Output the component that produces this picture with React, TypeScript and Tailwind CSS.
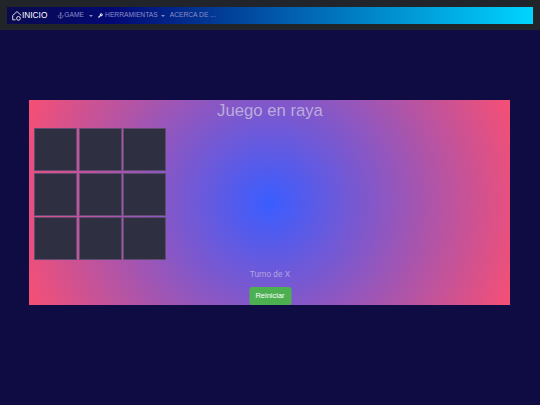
import { Anchor, Wrench } from "lucide-react";

function HomeIcon() {
  return (
    <svg width="10" height="11" viewBox="0 0 14 15" fill="none" stroke="white" strokeWidth="1.2">
      <path d="M1 13.5V7.5L7 2l6 5.5" />
      <path d="M1 13.5h4" />
      <circle cx="9" cy="11.5" r="2.6" />
    </svg>
  );
}

function Caret() {
  return <span className="inline-block border-x-[2px] border-t-[2px] border-x-transparent border-t-[#8d8dc8]" />;
}

const cells = [0, 1, 2, 3, 4, 5, 6, 7, 8];

export default function App() {
  return (
    <div className="flex h-[405px] w-[540px] flex-col overflow-hidden bg-[#0e0c42] font-['Liberation_Sans',sans-serif]">
      <div className="bg-[#212529] px-[7px] pb-[6px] pt-[7px]">
        <nav className="flex h-[17px] items-center bg-[linear-gradient(90deg,#0a0a4e_0%,#020873_20%,#00d4ff_100%)] pl-[5px] text-[6.7px] text-[#8d8dc8]">
          <HomeIcon />
          <span className="mr-[10px] text-[8.3px] text-white">INICIO</span>
          <Anchor size={7} className="text-[#8d8dc8]" />
          <span>GAME</span>
          <span className="ml-[5px] flex"><Caret /></span>
          <Wrench size={5} className="ml-[5px] mr-[2px] fill-white text-white" />
          <span>HERRAMIENTAS</span>
          <span className="ml-[3px] flex"><Caret /></span>
          <span className="ml-[5px]">ACERCA DE ...</span>
        </nav>
      </div>
      <main className="ml-[29px] mt-[70px] flex h-[205px] w-[481px] flex-col bg-[radial-gradient(circle,#3a5dff_0%,#f64f74_100%)]">
        <h1 className="h-[23px] pl-[1px] text-center text-[16.7px] leading-[22px] text-[#bcabdc]">Juego en raya</h1>
        <div className="ml-[5px] mt-[5px] grid grid-cols-[repeat(3,43px)] gap-[1.5px]">
          {cells.map((c) => (
            <div key={c} className="h-[43px] w-[43px] border border-[#5f4a70] bg-[#2e3042]" />
          ))}
        </div>
        <p className="mt-[8px] pl-[1px] text-center text-[8.3px] leading-[12px] text-[#b7a5e0]">Turno de X</p>
        <button className="mx-auto mt-[7px] h-[18px] w-[42px] translate-x-[0.5px] rounded-[3px] bg-[#4caf50] text-[7.5px] text-white">Reiniciar</button>
      </main>
    </div>
  );
}
